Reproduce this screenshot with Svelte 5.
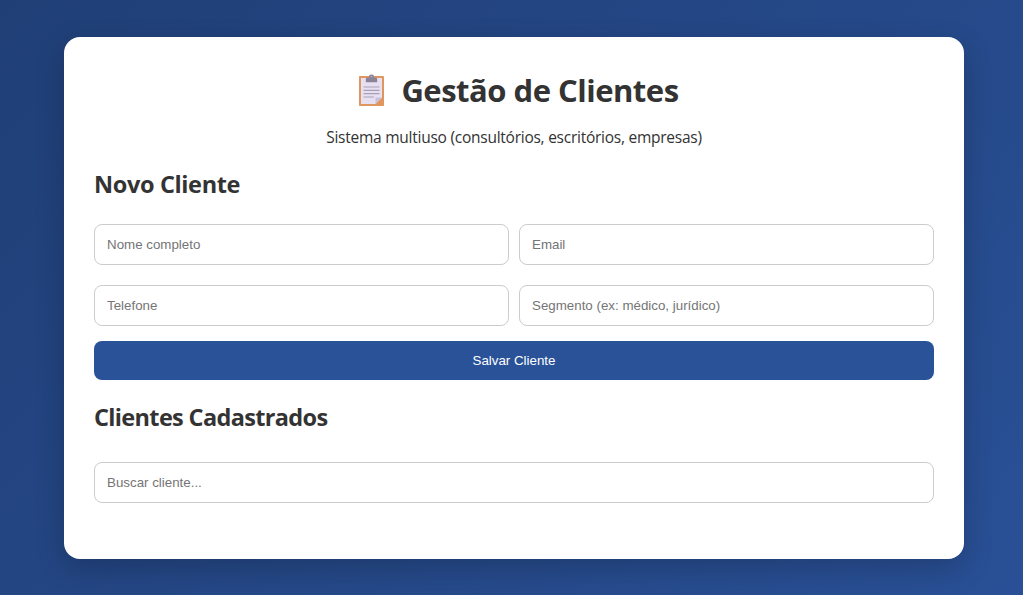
<script lang="ts">
	// Form fields, laid out two per row
	const fields = [
		{ key: 'nome', type: 'text', placeholder: 'Nome completo' },
		{ key: 'email', type: 'email', placeholder: 'Email' },
		{ key: 'telefone', type: 'text', placeholder: 'Telefone' },
		{ key: 'segmento', type: 'text', placeholder: 'Segmento (ex: médico, jurídico)' },
	];

	let cliente = $state<Record<string, string>>({ nome: '', email: '', telefone: '', segmento: '' });
	let clientes = $state<Record<string, string>[]>([]);
	let busca = $state('');

	const filtrados = $derived(clientes.filter((c) => c.nome.toLowerCase().includes(busca.toLowerCase())));

	function salvar(e: Event) {
		e.preventDefault();
		if (!cliente.nome) return;
		clientes.push({ ...cliente });
		cliente = { nome: '', email: '', telefone: '', segmento: '' };
	}
</script>

<div class="page">
	<main class="container">
		<h1>
			<svg class="icon" viewBox="0 0 25 32" aria-hidden="true">
				<rect x="0" y="2" width="25" height="30" rx=".8" fill="#e0965f" />
				<path d="M2 4h21v19.5l-6.5 6.5H2z" fill="#e6e0f1" />
				<path d="M23 23.5l-6.5 6.5v-5.7q0-.8.8-.8z" fill="#cbbfd9" />
				<path d="M6.8 8.2V5Q6.800 3.500 8.300 3.500h1.700V2.600Q10 .6 12 .6h1q2 0 2 2v.9h1.700q1.500 0 1.500 1.500v3.200z" fill="#8d8397" />
				<circle cx="12.500" cy="2.600" r=".7" fill="#c9c1d0" />
				<path d="M4.500 13h16M4.500 16.300h16M4.500 19.600h16M4.500 23h10.500" stroke="#aa9fb8" stroke-width="1.200" />
			</svg>
			<span>Gestão de Clientes</span>
		</h1>
		<p>Sistema multiuso (consultórios, escritórios, empresas)</p>

		<h2>Novo Cliente</h2>
		<form onsubmit={salvar}>
			<div class="grid">
				{#each fields as f (f.key)}
					<input type={f.type} placeholder={f.placeholder} bind:value={cliente[f.key]} />
				{/each}
			</div>
			<button type="submit">Salvar Cliente</button>
		</form>

		<h2 class="list-title">Clientes Cadastrados</h2>
		<input class="search" type="text" placeholder="Buscar cliente..." bind:value={busca} />
		{#each filtrados as c}
			<div class="cliente"><strong>{c.nome}</strong> {c.email} {c.telefone} {c.segmento}</div>
		{/each}
	</main>
</div>

<style>
	.page { box-sizing: border-box; min-height: 595px; padding: 37px 59px 36px 64px; background: linear-gradient(135deg, #203f77, #295096); color: #333; font-family: 'Open Sans', 'Noto Sans', sans-serif; }
	.container { box-sizing: border-box; width: 900px; min-height: 522px; padding: 30px; background: #fff; border-radius: 16px; box-shadow: 0 10px 30px rgba(0, 0, 0, 0.2); }
	h1 { display: flex; justify-content: center; align-items: center; height: 43px; margin: 0; padding-top: 2px; font-size: 31px; line-height: 43px; font-weight: 700; letter-spacing: -0.5px; }
	.icon { width: 25px; height: 32px; margin: 0 17.2px 1px 9.8px; }
	p { margin: 13px 0 0; font-size: 15.5px; line-height: 24px; letter-spacing: -0.25px; text-align: center; }
	h2 { margin: 19px 0 0; font-size: 23.5px; line-height: 32px; font-weight: 700; letter-spacing: -0.36px; }
	.list-title { margin-top: 21px; letter-spacing: -0.66px; }
	.grid { display: grid; grid-template-columns: 1fr 1fr; gap: 20px 10px; margin-top: 24px; }
	input { box-sizing: border-box; width: 100%; height: 41px; padding: 12px; border: 1px solid #ccc; border-radius: 8px; background: #fff; font-family: Arial, 'Liberation Sans', sans-serif; font-size: 13.333px; }
	input::placeholder { color: #757575; }
	button { display: block; width: 100%; height: 39px; margin-top: 15px; padding: 12px; border: none; border-radius: 8px; background: #2a5298; color: #fff; font-family: Arial, 'Liberation Sans', sans-serif; font-size: 13.333px; line-height: 15px; cursor: pointer; }
	button:hover { background: #1e3c72; }
	.search { margin-top: 29px; }
	.cliente { margin-top: 10px; padding: 12px; border-radius: 8px; background: #f4f6fa; }
</style>
